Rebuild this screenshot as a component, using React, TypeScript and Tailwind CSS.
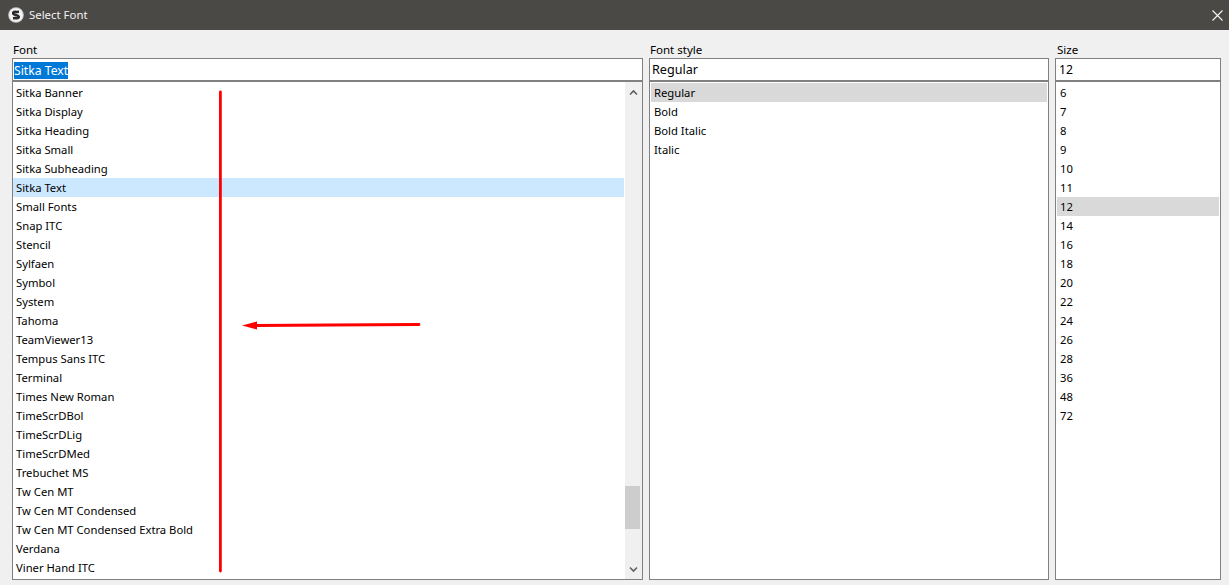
import React from 'react';

const fonts = [
    'Sitka Banner', 'Sitka Display', 'Sitka Heading', 'Sitka Small', 'Sitka Subheading', 'Sitka Text',
    'Small Fonts', 'Snap ITC', 'Stencil', 'Sylfaen', 'Symbol', 'System', 'Tahoma', 'TeamViewer13',
    'Tempus Sans ITC', 'Terminal', 'Times New Roman', 'TimeScrDBol', 'TimeScrDLig', 'TimeScrDMed',
    'Trebuchet MS', 'Tw Cen MT', 'Tw Cen MT Condensed', 'Tw Cen MT Condensed Extra Bold', 'Verdana', 'Viner Hand ITC',
];
const styles = ['Regular', 'Bold', 'Bold Italic', 'Italic'];
const sizes = ['6', '7', '8', '9', '10', '11', '12', '14', '16', '18', '20', '22', '24', '26', '28', '36', '48', '72'];

const Row: React.FC<{ text: string; className?: string }> = ({ text, className = '' }) => (
    <div className={`h-[19px] leading-[19px] pl-[3px] whitespace-nowrap ${className}`}>{text}</div>
);

const App: React.FC = () => {
    return (
        <div className="relative w-[1229px] h-[585px] overflow-hidden bg-[#f0f0f0] text-[11.25px] text-black font-['Noto_Sans','Open_Sans',sans-serif]">
            <div className="h-[30px] bg-[#4b4946] flex items-center pl-[8px] pr-[6px] text-[11.4px] text-[#f2f2f2]">
                <svg width="16" height="16" viewBox="0 0 16 16" className="mr-[5px]">
                    <circle cx="8" cy="8" r="7.8" fill="#c9c9c9" />
                    <circle cx="8" cy="8" r="6.8" fill="#f4f4f4" />
                    <path d="M11 4.8 8.6 5C6.6 4.4 4.8 5.2 5.2 6.6 5.6 8 10.6 8 10.8 9.6 11 11 9 11.6 7.4 11L5 11.2" fill="none" stroke="#2a2a2a" strokeWidth="2.6" />
                </svg>
                <span>Select Font</span>
                <svg width="11" height="11" viewBox="0 0 11 11" className="ml-auto">
                    <path d="M.5.5 10.5 10.5M10.5.5.5 10.5" stroke="#f4f4f4" strokeWidth="1.1" fill="none" />
                </svg>
            </div>

            <div className="flex gap-[6px] pl-[12px] pt-[13px]">
                <div className="w-[631px]">
                    <div className="h-[15px] leading-[13px] pl-[1px] text-[11.55px]">Font</div>
                    <div className="h-[23px] border border-[#808080] bg-white flex items-center pl-[1px] pt-[1px] text-[12.2px]">
                        <span className="bg-[#0078d7] text-white h-[17px] leading-[17px]">Sitka Text</span>
                    </div>
                    <div className="h-[499px] border border-[#808080] bg-white flex">
                        <div className="flex-1 pt-[1px] pr-[1px]">
                            {fonts.map((f) => (
                                <Row key={f} text={f} className={f === 'Sitka Text' ? 'bg-[#cce8ff]' : ''} />
                            ))}
                        </div>
                        <div className="w-[17px] bg-[#f0f0f0] flex flex-col items-center justify-between relative">
                            <svg width="9" height="7" viewBox="0 0 9 7" className="mt-[7px] -ml-[1px]">
                                <path d="M1 5.5 4.5 2 8 5.5" fill="none" stroke="#606060" strokeWidth="1.6" />
                            </svg>
                            <div className="absolute left-0 w-[15px] top-[404px] h-[43px] bg-[#cdcdcd]" />
                            <svg width="9" height="7" viewBox="0 0 9 7" className="mb-[6px] -ml-[1px]">
                                <path d="M1 1.5 4.5 5 8 1.5" fill="none" stroke="#606060" strokeWidth="1.6" />
                            </svg>
                        </div>
                    </div>
                </div>

                <div className="w-[400px]">
                    <div className="h-[15px] leading-[13px] pl-[1px] text-[11.55px]">Font style</div>
                    <div className="h-[23px] border border-[#808080] bg-white flex items-center pl-[2px] pt-[2px] text-[12.6px]">Regular</div>
                    <div className="h-[499px] border border-[#808080] bg-white pt-[1px] px-[1px]">
                        {styles.map((s) => (
                            <Row key={s} text={s} className={s === 'Regular' ? 'bg-[#d9d9d9]' : ''} />
                        ))}
                    </div>
                </div>

                <div className="w-[166px]">
                    <div className="h-[15px] leading-[13px] pl-[2px] text-[11.55px]">Size</div>
                    <div className="h-[23px] border border-[#808080] bg-white flex items-center pl-[3px] pt-[2px] text-[12.2px]">12</div>
                    <div className="h-[499px] border border-[#808080] bg-white pt-[1px] px-[1px]">
                        {sizes.map((s) => (
                            <Row key={s} text={s} className={s === '12' ? 'bg-[#d9d9d9]' : ''} />
                        ))}
                    </div>
                </div>
            </div>

            {/* red annotations on top of the screenshot */}
            <svg width="1229" height="585" className="absolute left-0 top-0 pointer-events-none">
                <path d="M220.4 92 220.4 571" stroke="#ff0000" strokeWidth="2.8" strokeLinecap="round" fill="none" />
                <path d="M256 325.5 330 325 419 324.5" stroke="#f00" strokeWidth="2.8" strokeLinecap="round" fill="none" />
                <path d="M242 325.5 257 321.5 257 329.5Z" fill="#f00" />
            </svg>
        </div>
    );
};

export default App;
